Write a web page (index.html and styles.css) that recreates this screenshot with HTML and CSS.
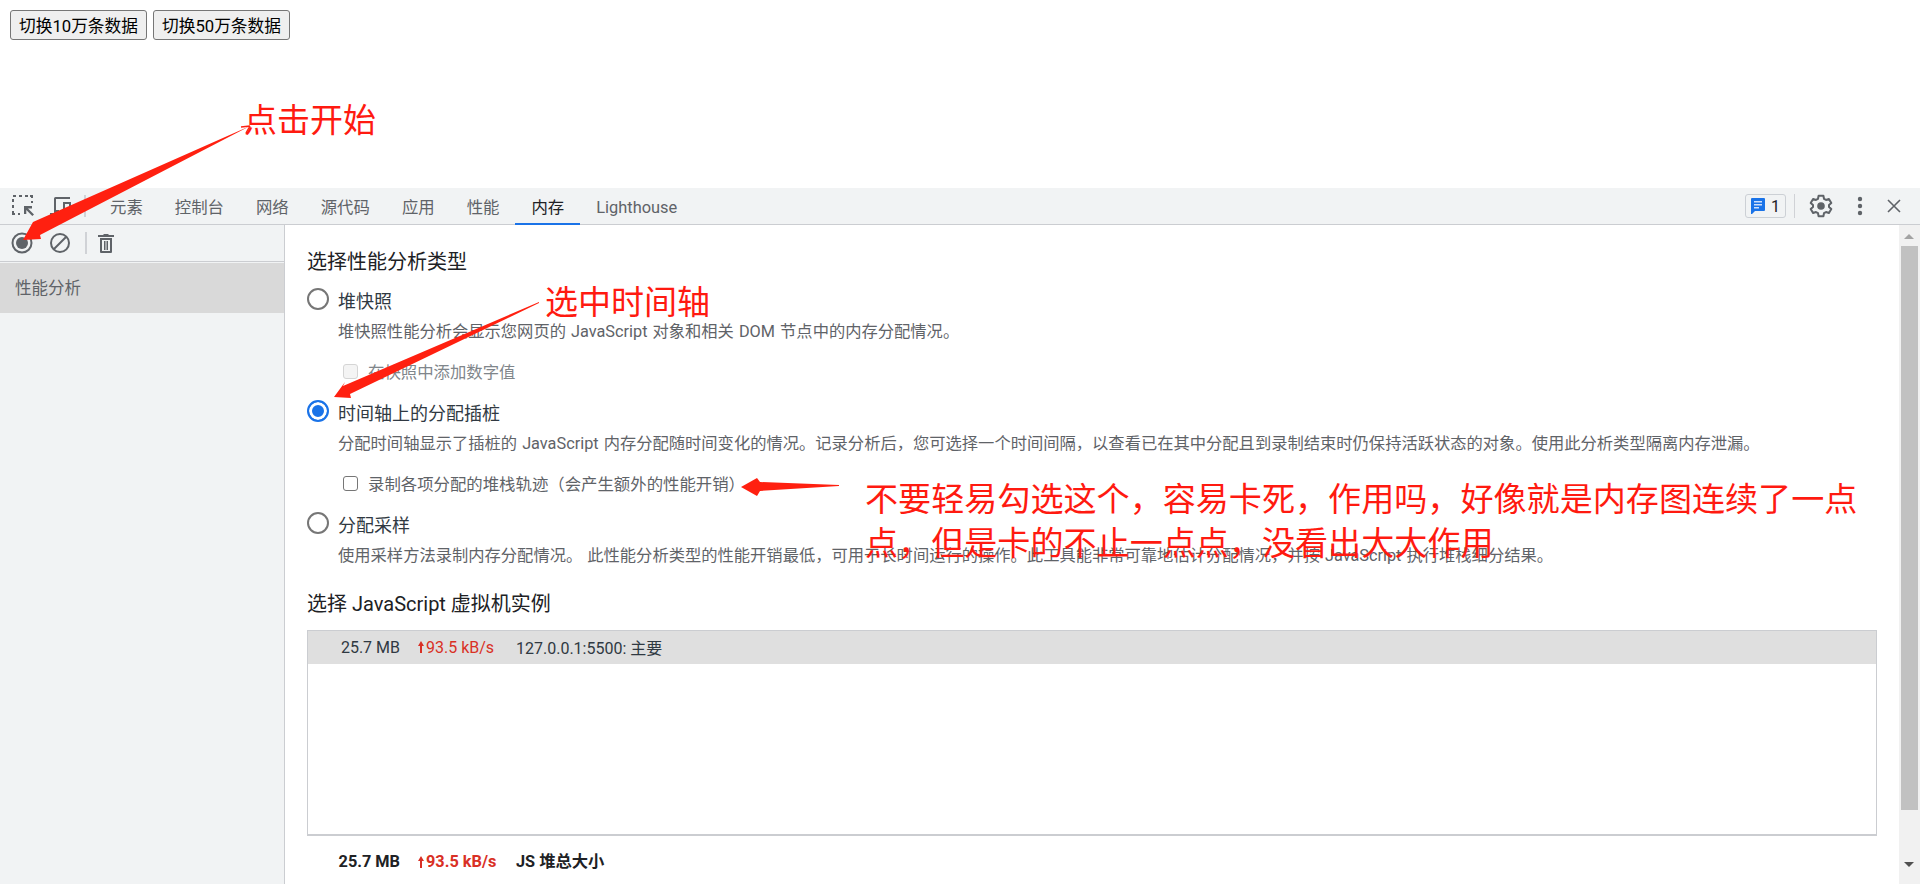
FILE: index.html
```html
<!DOCTYPE html>
<html lang="zh-CN">
<head>
<meta charset="utf-8">
<title>内存</title>
<link rel="stylesheet" href="styles.css">
</head>
<body>
<div class="page">
  <div class="app">
    <button class="btn">切换10万条数据</button>
    <button class="btn">切换50万条数据</button>
  </div>
  <div class="devtools">
    <div class="tabbar">
      <div class="tab-icons">
        <svg class="ic" width="24" height="24" viewBox="0 0 24 24"><path d="M2 2h3M8 2h3M14 2h3M19 2h2v2M2 5v3M2 11v3M2 17v3h2M21 7v2M7 20h2" fill="none" stroke="#5f6368" stroke-width="2"/><path d="M13 12h8v2.400h-4l6 6-1.700 1.700-6-6V20H13z" fill="#5f6368"/></svg>
        <svg class="ic" width="24" height="24" viewBox="0 0 24 24"><path d="M5 16V4.500A1.500 1.500 0 0 1 6.500 3H21v2H7v11h3v5H1v-2h4z M2 18h7" fill="#5f6368"/><path d="M14 8h8v13h-8z M16 10v9h4v-9z" fill="#5f6368" fill-rule="evenodd"/></svg>
        <span class="vsep"></span>
      </div>
      <span class="tab">元素</span>
      <span class="tab">控制台</span>
      <span class="tab">网络</span>
      <span class="tab">源代码</span>
      <span class="tab">应用</span>
      <span class="tab">性能</span>
      <span class="tab active">内存</span>
      <span class="tab latin">Lighthouse</span>
      <div class="tab-right">
        <span class="badge">
          <svg width="14" height="16" viewBox="0 0 14 16"><path d="M1 0h12a1 1 0 0 1 1 1v11a1 1 0 0 1-1 1H4l-3 3H0V1a1 1 0 0 1 1-1z" fill="#1a73e8"/><path d="M3 3h8v1.500H3zM3 6h8v1.500H3zM3 9h5v1.500H3z" fill="#cfe0fb"/></svg>
          <span>1</span>
        </span>
        <span class="vsep thin"></span>
        <svg class="gear" width="24" height="24" viewBox="0 0 24 24"><path d="M9.600 1.800h4.800l.6 3 2 1.150 2.900-1 2.400 4.150-2.300 2v1.800l2.300 2-2.400 4.150-2.900-1-2 1.150-.6 3H9.600l-.6-3-2-1.150-2.900 1-2.400-4.150 2.300-2v-1.800l-2.300-2 2.400-4.150 2.900 1 2-1.150z" fill="none" stroke="#5f6368" stroke-width="2" stroke-linejoin="round"/><circle cx="12" cy="12" r="3.800" fill="#5f6368"/></svg>
        <svg class="dots" width="6" height="20" viewBox="0 0 6 20"><circle cx="3" cy="3" r="2.200" fill="#5f6368"/><circle cx="3" cy="10" r="2.200" fill="#5f6368"/><circle cx="3" cy="17" r="2.200" fill="#5f6368"/></svg>
        <svg class="close" width="14" height="14" viewBox="0 0 14 14"><path d="M1 1l12 12M13 1L1 13" stroke="#5f6368" stroke-width="1.600" fill="none"/></svg>
      </div>
    </div>
    <div class="main">
      <aside class="sidebar">
        <div class="side-tools">
          <svg class="rec" width="22" height="22" viewBox="0 0 22 22"><circle cx="11" cy="11" r="9.500" fill="none" stroke="#5f6368" stroke-width="2"/><circle cx="11" cy="11" r="6" fill="#5f6368"/></svg>
          <svg class="clear" width="22" height="22" viewBox="0 0 22 22"><circle cx="11" cy="11" r="9" fill="none" stroke="#5f6368" stroke-width="2"/><path d="M5 17L17 5" stroke="#5f6368" stroke-width="2"/></svg>
          <span class="vsep side"></span>
          <svg class="trash" width="16" height="20" viewBox="0 0 16 20"><path d="M0 2h5l1-1h4l1 1h5v2H0zM2 5h12v14a1 1 0 0 1-1 1H3a1 1 0 0 1-1-1zM4 7v11h8V7zM6 8h1.500v9H6zM8.500 8H10v9H8.500z" fill="#5f6368" fill-rule="evenodd"/></svg>
        </div>
        <div class="side-item">性能分析</div>
      </aside>
      <section class="panel">
        <h2 class="head first">选择性能分析类型</h2>
        <div class="option opt1"><span class="radio"></span><span class="opt-label">堆快照</span></div>
        <p class="desc">堆快照性能分析会显示您网页的 JavaScript 对象和相关 DOM 节点中的内存分配情况。</p>
        <div class="check off"><span class="box"></span><span>在快照中添加数字值</span></div>
        <div class="option"><span class="radio on"></span><span class="opt-label">时间轴上的分配插桩</span></div>
        <p class="desc">分配时间轴显示了插桩的 JavaScript 内存分配随时间变化的情况。记录分析后，您可选择一个时间间隔，以查看已在其中分配且到录制结束时仍保持活跃状态的对象。使用此分析类型隔离内存泄漏。</p>
        <div class="check"><span class="box"></span><span>录制各项分配的堆栈轨迹（会产生额外的性能开销）</span></div>
        <div class="option"><span class="radio"></span><span class="opt-label">分配采样</span></div>
        <p class="desc">使用采样方法录制内存分配情况。 此性能分析类型的性能开销最低，可用于长时间运行的操作。此工具能非常可靠地估计分配情况，并按 JavaScript 执行堆栈细分结果。</p>
        <h2 class="head second">选择 JavaScript 虚拟机实例</h2>
        <div class="vmlist">
          <div class="vmrow">
            <span class="size">25.7 MB</span>
            <span class="rate"><svg class="up" width="6" height="12" viewBox="0 0 6 12"><path d="M3 0l3 5H4v7H2V5H0z" fill="#d93025"/></svg>93.5 kB/s</span>
            <span class="vmname">127.0.0.1:5500: 主要</span>
          </div>
        </div>
        <div class="total">
          <span class="size">25.7 MB</span>
          <span class="rate"><svg class="up" width="6" height="12" viewBox="0 0 6 12"><path d="M3 0l3 5H4v7H2V5H0z" fill="#d93025"/></svg>93.5 kB/s</span>
          <span class="vmname">JS 堆总大小</span>
        </div>
      </section>
      <div class="scrollbar">
        <span class="arrow up-a"></span>
        <span class="thumb"></span>
        <span class="arrow down-a"></span>
      </div>
    </div>
  </div>
  <svg class="arrows" width="1920" height="884" viewBox="0 0 1920 884">
    <path d="M250 126L33 222 23 240 41 239 40 235z" fill="#ff2010"/>
    <path d="M250 126L241 127M250 126L246 133" stroke="#ff2010" stroke-width="1.500" fill="none"/>
    <path d="M539 302L343 386 345 382 334 397 351 398 350 394 539 303z" fill="#ff2010"/>
    <path d="M839 485L760 482 757 478 741 487 757 496 760 491 839 486z" fill="#ff2010"/>
  </svg>
  <div class="note n1">点击开始</div>
  <div class="note n2">选中时间轴</div>
  <div class="note n3">不要轻易勾选这个，容易卡死，作用吗，好像就是内存图连续了一点点，但是卡的不止一点点，没看出大大作用</div>
</div>
</body>
</html>
```
FILE: styles.css
```css
* { box-sizing: border-box; }
html, body { margin: 0; padding: 0; height: 100%; overflow: hidden; background: #fff; }
body { font-family: Roboto, "Noto Sans CJK SC", sans-serif; font-size: 16px; color: #303942; text-spacing-trim: space-all; }
.page { position: relative; width: 1920px; height: 884px; display: flex; flex-direction: column; overflow: hidden; }
.app { height: 188px; padding: 10px 10px 0; display: flex; gap: 6px; align-items: flex-start; flex: none; }
.btn { width: 137px; height: 30px; padding: 0; background: #efefef; border: 1px solid #767676; border-radius: 3px; font: 16.700px Roboto, "Noto Sans CJK SC", sans-serif; color: #000; }
.devtools { flex: 1; display: flex; flex-direction: column; min-height: 0; background: #fff; }
.tabbar { height: 37px; flex: none; display: flex; align-items: stretch; background: #f1f3f4; border-bottom: 1px solid #cbcdd1; }
.tab-icons { width: 94px; display: flex; align-items: center; padding-left: 11px; }
.ic { flex: none; margin-right: 14px; }
.vsep { display: block; width: 2px; height: 22px; background: #d0d2d6; flex: none; }
.ic + .ic { margin-right: 11px; }
.tab { padding: 0 16px; display: flex; align-items: center; font-size: 16.400px; color: #5f6368; border-bottom: 2px solid transparent; margin-bottom: -1px; }
.tab.active { color: #202124; border-bottom-color: #1a73e8; }
.tab.latin { padding-top: 3px; }
.tab-right { margin-left: auto; display: flex; align-items: center; padding-right: 19px; }
.badge { width: 41px; height: 24px; display: flex; align-items: center; justify-content: center; gap: 6px; border: 1px solid #ccd0d5; border-radius: 3px; font-size: 16px; color: #202124; }
.vsep.thin { width: 1px; height: 24px; margin: 0 14px 0 8px; }
.gear { margin-right: 24px; }
.dots { margin-right: 24px; }
.main { flex: 1; display: flex; min-height: 0; }
.sidebar { width: 285px; flex: none; background: #f1f3f4; border-right: 1px solid #cbcdd1; }
.side-tools { height: 37px; display: flex; align-items: center; padding-left: 11px; border-bottom: 1px solid #cbcdd1; }
.rec { margin-right: 16px; }
.clear { margin-right: 14px; }
.vsep.side { margin-right: 11px; }
.side-item { margin-top: 1px; height: 50px; line-height: 51px; padding-left: 15px; background: #d9d9d9; color: #5f6368; font-size: 16.500px; }
.panel { flex: 1; min-width: 0; padding-left: 22px; padding-right: 22px; overflow: hidden; }
.head { margin: 0; font-weight: 400; font-size: 20px; line-height: 28px; color: #202124; }
.head.first { margin-top: 23px; }
.head.second { margin-top: 22px; }
.option { display: flex; align-items: center; height: 24px; }
.opt1 { margin-top: 12px; }
.radio { width: 22px; height: 22px; border: 2px solid #767676; border-radius: 50%; background: #fff; flex: none; margin-right: 9px; margin-bottom: 2px; }
.radio.on { border-color: #1a73e8; box-shadow: inset 0 0 0 3px #fff; background: #1a73e8; }
.opt-label { font-size: 18px; color: #303942; }
.desc { margin: 8px 0 0 31px; font-size: 16.300px; line-height: 24px; color: #5f6368; white-space: nowrap; word-spacing: 1px; }
.check { display: flex; align-items: center; height: 24px; margin: 15px 0 17px 36px; font-size: 16.400px; color: #5f6368; }
.box { width: 15px; height: 15px; border: 1.500px solid #767676; border-radius: 3px; margin-right: 10px; background: #fff; flex: none; }
.check.off .box { border-color: #d5d5d5; background: #f4f4f4; }
.check.off { color: #80868b; }
.vmlist { margin-top: 12px; height: 206px; border: 1px solid #cbcdd1; border-bottom-width: 2px; }
.vmrow { height: 33px; padding-bottom: 1px; background: #dfdfdf; display: flex; align-items: center; font-size: 16px; color: #303942; }
.size { width: 92px; text-align: right; flex: none; }
.rate { color: #d93025; width: 98px; margin-left: 18px; flex: none; display: flex; align-items: center; gap: 2px; }
.up { flex: none; }
.total { margin: 14px 0 0 1px; display: flex; align-items: center; font-weight: 700; font-size: 16.300px; color: #202124; line-height: 24px; }
.scrollbar { width: 21px; flex: none; background: #f1f1f1; display: flex; flex-direction: column; align-items: center; padding-right: 1px; }
.thumb { width: 17px; height: 564px; background: #c1c1c1; margin-top: 7px; }
.arrow { width: 0; height: 0; border-left: 5px solid transparent; border-right: 5px solid transparent; }
.up-a { border-bottom: 5px solid #a3a3a3; margin-top: 9px; }
.down-a { border-top: 5px solid #505050; margin-top: 52px; }
.arrows { position: absolute; left: 0; top: 0; pointer-events: none; }
.note { position: absolute; color: #ff1a10; font-family: "Noto Sans CJK SC", sans-serif; font-size: 33px; line-height: 44px; }
.n1 { left: 244px; top: 96px; }
.n2 { left: 545px; top: 278px; }
.n3 { left: 865px; top: 475px; width: 1000px; font-size: 33.100px; }
```
